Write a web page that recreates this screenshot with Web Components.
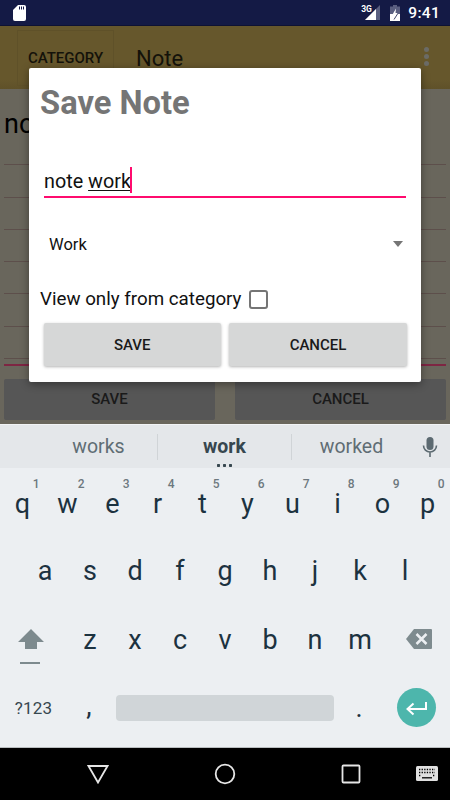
<!DOCTYPE html>
<html><head><meta charset="utf-8"><title>Save Note</title>
<style>
html,body{margin:0;padding:0;height:800px;overflow:hidden;background:#000}
body{font-family:Roboto,"Liberation Sans",sans-serif}
</style></head>
<body>
<phone-shell>
  <status-bar></status-bar>
  <app-bar></app-bar>
  <note-page></note-page>
  <soft-keyboard></soft-keyboard>
  <nav-bar></nav-bar>
  <save-dialog slot="overlay"></save-dialog>
</phone-shell>
<script>
function def(name, html){
  customElements.define(name, class extends HTMLElement{
    constructor(){super();this.attachShadow({mode:'open'}).innerHTML=html(this);}
  });
}
def('phone-shell',()=>`<style>
:host{display:flex;flex-direction:column;position:relative;width:450px;height:800px;overflow:hidden}
</style><slot></slot><slot name="overlay"></slot>`);

def('status-bar',()=>`<style>
:host{display:flex;align-items:center;height:25px;background:#141a45;padding:0 10px 0 13px;flex:none;border-bottom:1px solid #0e1233;color:#fff;font:500 15.500px Roboto,sans-serif}
svg{display:block}
.sp{flex:1}
.g{position:relative;width:20px;height:16px;margin-right:9px}
.g b{position:absolute;left:0;top:0;font:700 8.500px Roboto,sans-serif;letter-spacing:-.2px;line-height:9px;z-index:1}
.g svg{position:absolute;left:0;top:0}
.t{margin-left:8px;letter-spacing:.3px}
</style>
<svg width="13" height="16" viewBox="0 0 13 16"><path fill="#fff" d="M5 0H11a2 2 0 0 1 2 2V14a2 2 0 0 1-2 2H2a2 2 0 0 1-2-2V5Z"/><path stroke="#141a45" stroke-width="1" d="M6.500 1.500v3M8.500 1.500v3M10.500 1.500v3"/></svg>
<span class="sp"></span>
<span class="g"><b>3G</b><svg width="20" height="16" viewBox="0 0 20 16"><path fill="#5a5f80" d="M19 0V15H4Z"/><path fill="#fff" d="M15 4V15H4Z"/></svg></span>
<svg width="10" height="16" viewBox="0 0 10 16"><path fill="#5a5f80" d="M3 0H7V1.500H10V16H0V1.500H3Z"/><path fill="#fff" d="M0 9H10V16H0Z"/><path fill="#fff" d="M6 3.500 2.500 9.500H4.500L4 14 7.500 8H5.500Z"/><path fill="none" stroke="#141a45" stroke-width=".8" d="M7.500 9 4 14.500"/></svg>
<span class="t">9:41</span>`);

def('app-bar',()=>`<style>
:host{display:flex;align-items:center;height:63px;flex:none;padding:0 21px 0 17px;background:linear-gradient(#66572c 0,#66572c 85%,#5f5129 100%);color:#14120a}
.cat{box-sizing:border-box;width:97px;height:56px;display:flex;align-items:center;justify-content:center;border:1px solid #5f5129;font:500 15px Roboto,sans-serif;padding-top:1px}
.ti{font:400 22px Roboto,sans-serif;margin-left:22px;padding-top:2px;flex:1}
.dots{display:grid;gap:2px;width:5px;margin-bottom:2px}
.dots i{display:block;width:5px;height:5px;border-radius:50%;background:#6b6b66}
</style><div class="cat">CATEGORY</div><div class="ti">Note</div><div class="dots"><i></i><i></i><i></i></div>`);

def('note-page',()=>`<style>
:host{display:block;flex:1;min-height:0;background:#69665c;padding:0 4px;box-sizing:border-box;color:#000}
.tx{font:400 27px/70px Roboto,sans-serif;height:44px}
.ln{height:32.300px;box-sizing:border-box;border-bottom:1px solid #5d4f4b}
.pk{height:2px;background:#7e2643;margin-top:5px}
.btns{display:grid;grid-template-columns:211px 211px;justify-content:space-between;margin-top:13px}
.b{height:41px;background:#565656;border-radius:2px;display:flex;align-items:center;justify-content:center;font:500 15px Roboto,sans-serif;color:#1a1a1a}
</style>
<div class="tx">no</div>
<div class="ln"></div><div class="ln"></div><div class="ln"></div><div class="ln"></div><div class="ln"></div><div class="ln"></div><div class="ln" style="height:32px"></div>
<div class="pk"></div>
<div class="btns"><div class="b">SAVE</div><div class="b">CANCEL</div></div>`);

def('sk-button',()=>`<style>
:host{display:flex;align-items:center;justify-content:center;height:43px;background:#d6d7d7;border-radius:2px;box-shadow:0 1px 3px rgba(0,0,0,.3);font:500 15px Roboto,sans-serif;color:#1a1a1a}
</style><slot></slot>`);

def('save-dialog',()=>`<style>
:host{position:absolute;left:29px;top:68px;width:392px;height:314px;box-sizing:border-box;background:#fff;border-radius:2px;box-shadow:0 2px 8px rgba(0,0,0,.4);padding:0 11px;color:#111;display:flex;flex-direction:column}
h1{margin:17px 0 0;font:700 32.700px/36px Roboto,sans-serif;color:#757575}
.field{margin:43px 4px 0 4px;height:32px;border-bottom:2px solid #ff0b6e;display:flex;align-items:flex-end;font:400 19.800px/24px Roboto,sans-serif}
.field span{padding-bottom:2px}
.field u{text-decoration:underline;text-underline-offset:2px}
.field .caret{display:block;width:1.500px;height:26px;padding:0;background:#ff0b6e;margin-left:-.5px;position:relative;top:-3px}
.spin{display:flex;align-items:center;justify-content:space-between;height:48px;margin:22px 4px 0 9px;font:400 16.500px Roboto,sans-serif}
.spin i{width:0;height:0;border-left:5.500px solid transparent;border-right:5.500px solid transparent;border-top:6px solid #757575;margin-right:3px}
.chk{display:flex;align-items:center;margin-top:15px;height:32px;font:400 18.750px Roboto,sans-serif}
.chk i{box-sizing:border-box;width:19px;height:19px;border:2px solid #757575;border-radius:3px;margin-left:7px;margin-top:1px}
.bt{display:grid;grid-template-columns:177.500px 178px;gap:8px;margin:8px 0 0 3.500px}
</style>
<h1>Save Note</h1>
<div class="field"><span>note <u>work</u></span><span class="caret"></span></div>
<div class="spin"><span>Work</span><i></i></div>
<div class="chk"><span>View only from category</span><i></i></div>
<div class="bt"><sk-button>SAVE</sk-button><sk-button>CANCEL</sk-button></div>`);

def('kb-key',el=>{
  const h=el.getAttribute('hint');
  return `<style>
:host{display:block;position:relative;text-align:center;font:400 27px/1 Roboto,sans-serif;color:#1c3240;min-width:0}
b{position:absolute;right:5.500px;top:-14px;font:500 12px/14px Roboto,sans-serif;color:#6d787e}
</style><slot></slot>${h?`<b>${h}</b>`:''}`;
});

def('soft-keyboard',()=>{
 const r1='qwertyuiop',nums='1234567890';
 return `<style>
:host{display:block;flex:none;height:324px;background:#eceff2;border-bottom:1px solid #b9bdbf;box-sizing:border-box}
.sug{display:grid;grid-template-columns:157px 1px 133px 1px 138px 20px;height:44px;background:#e4e7ea;border-top:1px solid #f1f3f5;box-sizing:border-box;align-items:center;font:400 19.500px Roboto,sans-serif;color:#5f6d74;position:relative}
.sug span{text-align:center;padding-bottom:1px}
.sug span:first-child{padding-left:40px}
.sug span:nth-of-type(3){padding-right:19px}
.sug s{display:block;height:26px;background:#d0d4d7}
.sug b{font-weight:700;color:#37474f}
.sug svg{display:block;margin-left:-8px}
.sug em{position:absolute;left:217px;bottom:1px;width:15px;height:3px;background:radial-gradient(circle at 1.500px 1.500px,#37474f 1.400px,transparent 1.500px) 0 0/6px 3px}
.row{display:grid;align-items:start}
.r1{grid-template-columns:repeat(10,45px);padding-top:23px;height:43px}
.r2{grid-template-columns:repeat(9,45px);padding:24px 0 0 22.500px;height:45px}
.r3{grid-template-columns:67.500px repeat(7,45px) 67.500px;padding-top:24px;height:47px}
.r3 svg{margin-top:-2px}
.r4{grid-template-columns:62px 54px 218px 50px 66px;height:66px}
.q{font:400 17px Roboto,sans-serif;color:#37474f;text-align:center;padding:24px 0 0 5px;letter-spacing:.2px}
.p{font:400 27px Roboto,sans-serif;color:#1c3240;text-align:center;padding-top:18px}
.c{padding-top:16px}
.space{height:26px;background:#d0d5d8;border-radius:4px;margin-top:21px}
.ent{width:39px;height:39px;border-radius:50%;background:#4db6ac;margin:14px 0 0 12.500px;display:flex;align-items:center;justify-content:center}
svg{display:block}
</style>
<div class="sug"><span>works</span><s></s><span><b>work</b></span><s></s><span>worked</span>
<svg width="16" height="20" viewBox="0 0 16 20"><rect x="4.500" y="0" width="7" height="13" rx="3.500" fill="#5c6a71"/><path d="M1.500 8.500a6.500 6.500 0 0 0 13 0M8 15V20" fill="none" stroke="#5c6a71" stroke-width="1.600"/></svg><em></em></div>
<div class="row r1">${[...r1].map((c,i)=>`<kb-key hint="${nums[i]}">${c}</kb-key>`).join('')}</div>
<div class="row r2">${[...'asdfghjkl'].map(c=>`<kb-key>${c}</kb-key>`).join('')}</div>
<div class="row r3">
<svg width="67" height="40" viewBox="0 0 67 40"><path fill="#7d8a8e" d="M31 4 44 17H37V24H25V17H18Z"/><rect x="20" y="37" width="20" height="2" fill="#7d8a8e"/></svg>
<kb-key>z</kb-key><kb-key>x</kb-key><kb-key>c</kb-key><kb-key>v</kb-key><kb-key>b</kb-key><kb-key>n</kb-key><kb-key>m</kb-key>
<svg width="67" height="40" viewBox="0 0 67 40"><path fill="#7e8b8f" d="M23 14 31 4H48a1 1 0 0 1 1 1V23a1 1 0 0 1-1 1H31Z"/><path stroke="#eceff2" stroke-width="2.500" d="M33.500 9l10 10M43.500 9l-10 10"/></svg>
</div>
<div class="row r4"><div class="q">?123</div><div class="p c">,</div><div class="space"></div><div class="p">.</div><div class="ent"><svg width="22" height="16" viewBox="0 0 22 16"><path d="M21 2V9H3M8.500 3.500 2.500 9l6 5.500" fill="none" stroke="#fff" stroke-width="2"/></svg></div></div>`;
});

def('nav-bar',()=>`<style>
:host{display:flex;align-items:center;height:52px;background:#000;flex:none;padding-left:87px}
svg{display:block}
</style>
<svg width="22" height="20" viewBox="0 0 22 20"><path d="M1.500 2H20.500L11 18.500Z" fill="none" stroke="#e6e6e6" stroke-width="1.800"/></svg>
<svg style="margin-left:105px" width="22" height="22" viewBox="0 0 22 22"><circle cx="11" cy="11" r="9.300" fill="none" stroke="#e6e6e6" stroke-width="1.800"/></svg>
<svg style="margin-left:105px" width="20" height="20" viewBox="0 0 20 20"><rect x="1.500" y="1.500" width="17" height="17" rx="1" fill="none" stroke="#e6e6e6" stroke-width="1.800"/></svg>
<svg style="margin-left:55px" width="22" height="16" viewBox="0 0 22 16"><rect width="22" height="15" rx="1.500" fill="#e0e0e0"/><path stroke="#000" stroke-width="1.300" stroke-dasharray="1.300 1.300" d="M3 3.500H19M3 6.500H19M3 9.500H5M17 9.500H19"/><path stroke="#000" stroke-width="1.300" d="M6 11.800H16"/></svg>`);
</script>
</body></html>
